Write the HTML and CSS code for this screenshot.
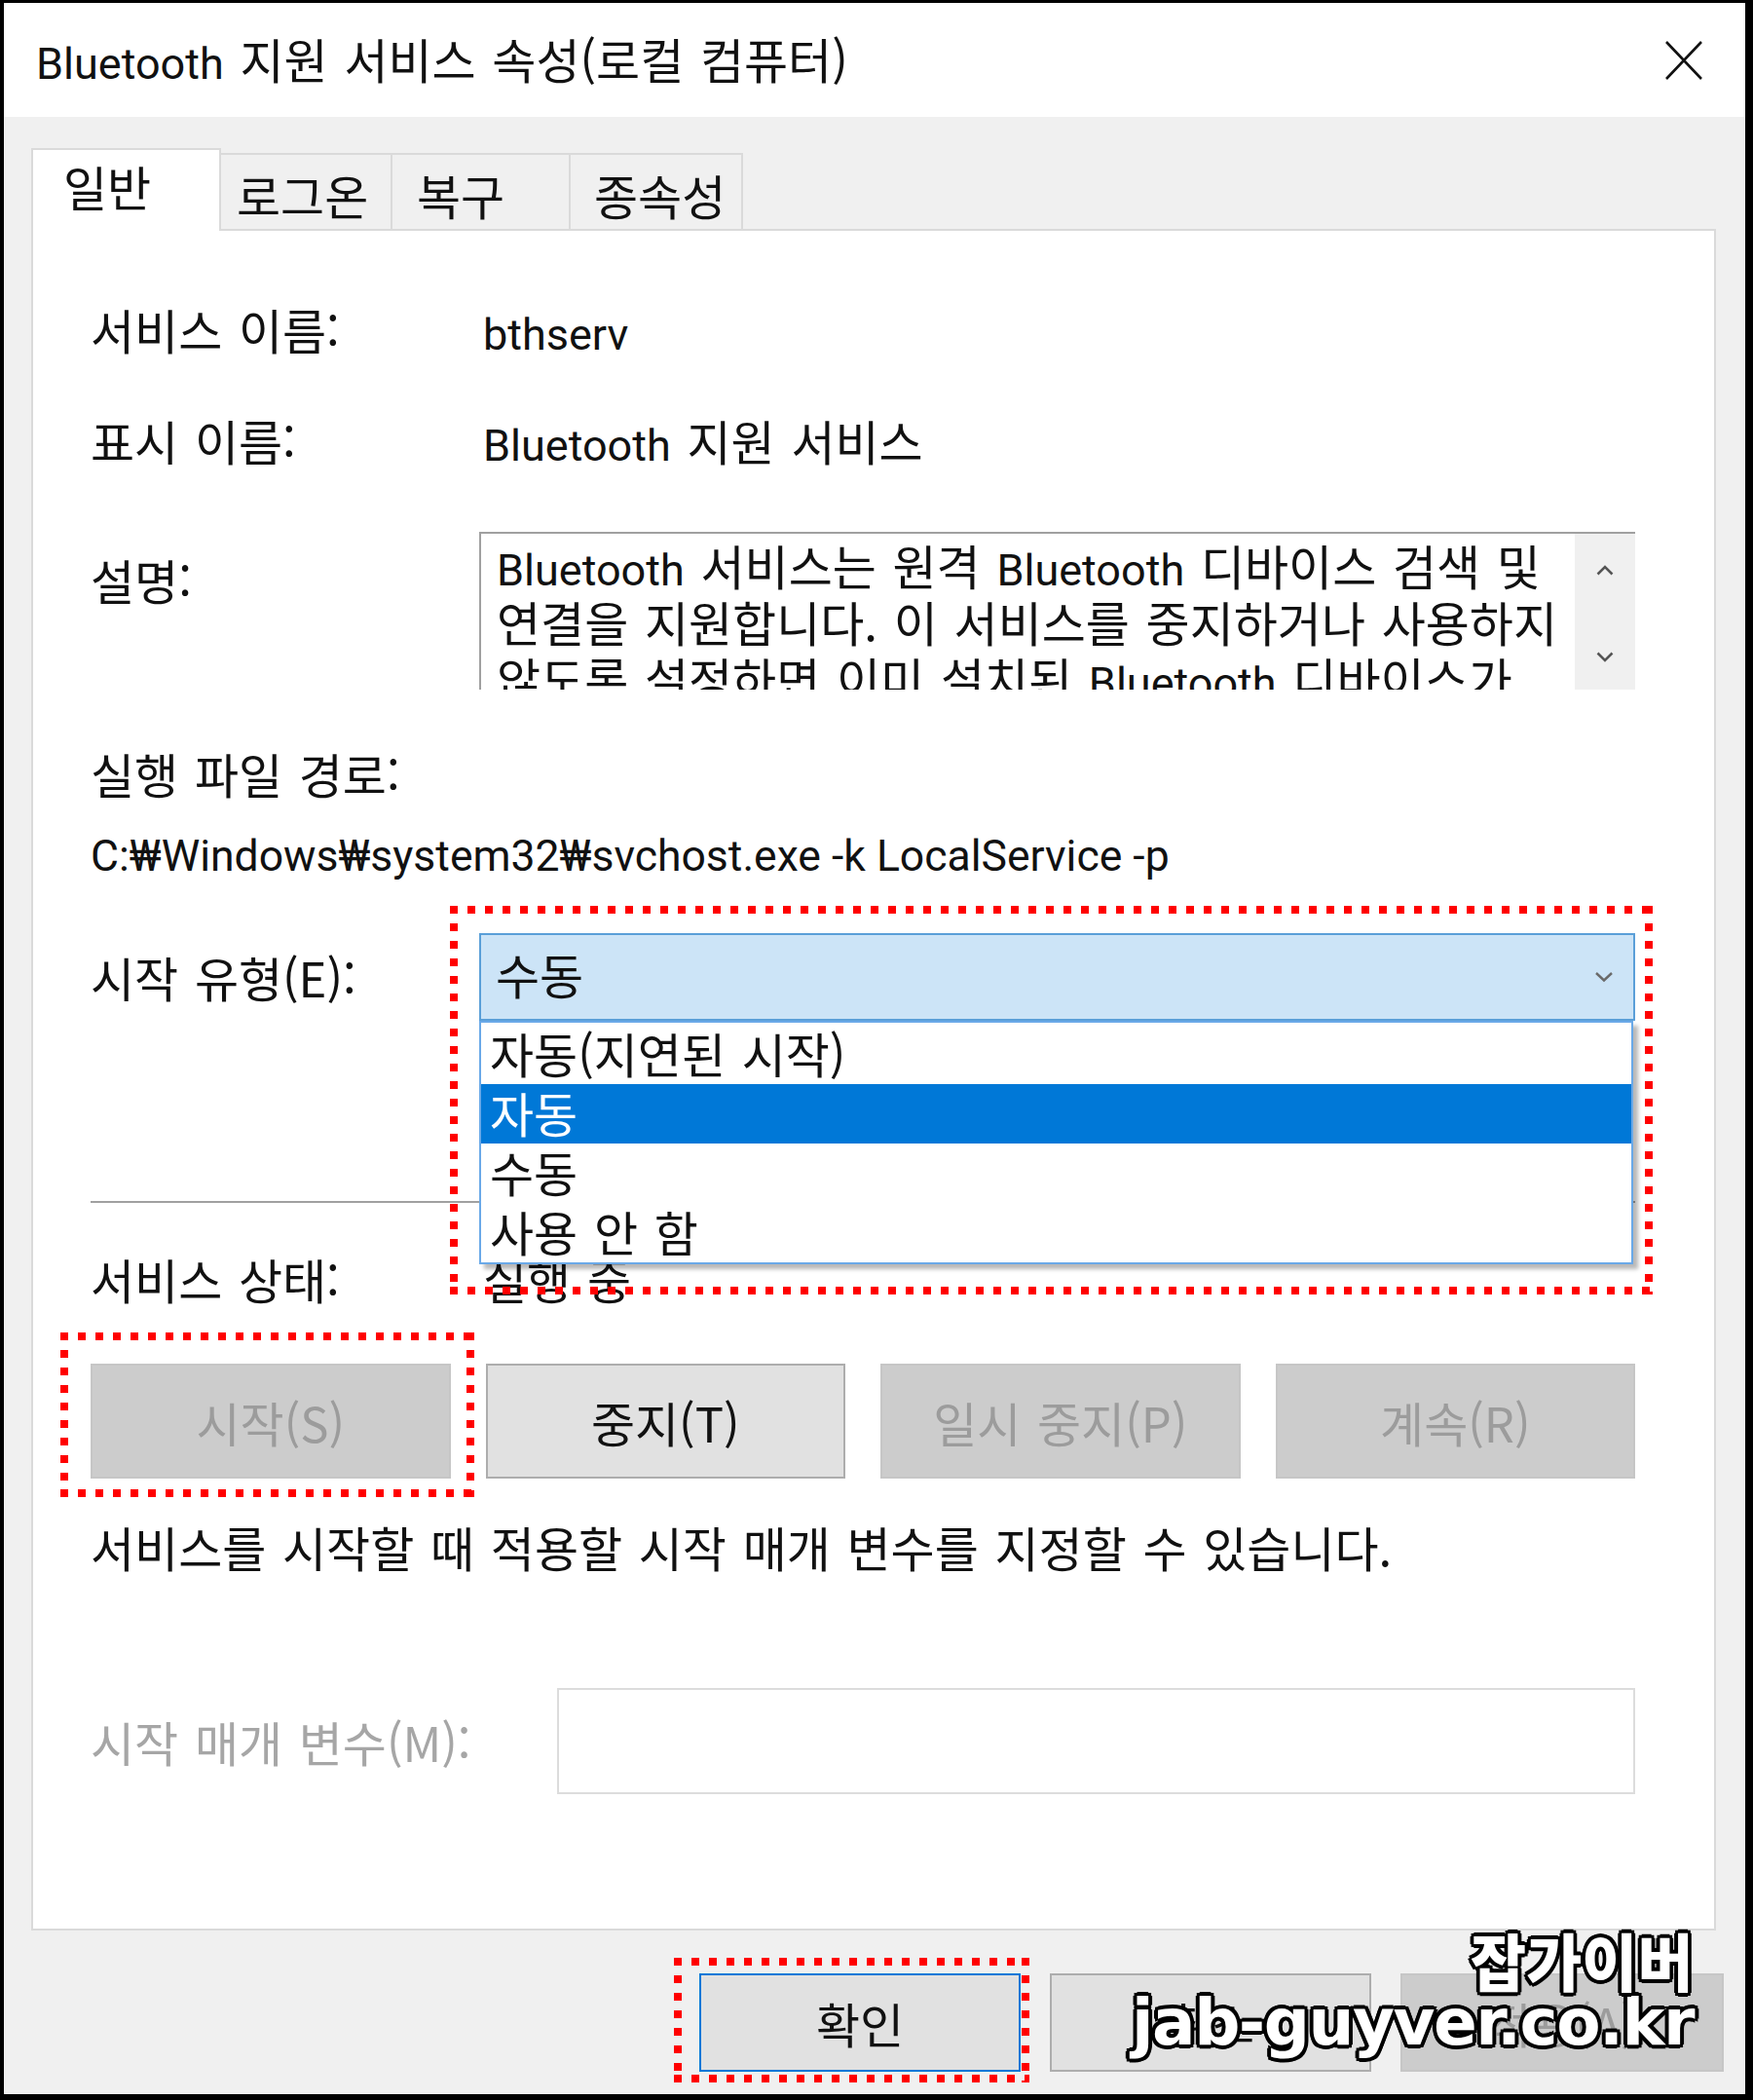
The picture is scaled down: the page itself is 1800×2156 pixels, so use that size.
FILE: index.html
```html
<!DOCTYPE html>
<html lang="ko">
<head>
    <meta charset="utf-8">
    <link rel="stylesheet" href="styles.css">
</head>
<body>
    <div class="window">
        <div class="titlebar">
            <span class="title"><span class="en">Bluetooth</span> 지원 서비스 속성(로컬 컴퓨터)</span>
            <svg class="close" viewBox="0 0 40 42"><path d="M2 2 L38 40 M38 2 L2 40" stroke="#111" stroke-width="2.6" fill="none"/></svg>
        </div>

        <div class="tabs">
            <div class="tab tab-general active">일반</div>
            <div class="tab tab-logon">로그온</div>
            <div class="tab tab-recovery">복구</div>
            <div class="tab tab-deps">종속성</div>
        </div>

        <div class="panel">
            <div class="field">
                <span class="label">서비스 이름:</span>
                <span class="value"><span class="en">bthserv</span></span>
            </div>
            <div class="field field-display">
                <span class="label">표시 이름:</span>
                <span class="value"><span class="en">Bluetooth</span> 지원 서비스</span>
            </div>
            <div class="field field-desc">
                <span class="label">설명:</span>
                <div class="desc">
                    <div class="desc-text">
                        <span class="en">Bluetooth</span> 서비스는 원격 <span class="en">Bluetooth</span> 디바이스 검색 및<br>
                        연결을 지원합니다. 이 서비스를 중지하거나 사용하지<br>
                        않도록 설정하면 이미 설치된 <span class="en">Bluetooth</span> 디바이스가
                    </div>
                    <div class="scroll">
                        <svg class="chev" viewBox="0 0 18 12"><polyline points="1.5,10.5 9,3 16.5,10.5" fill="none" stroke="#555" stroke-width="2.5"/></svg>
                        <svg class="chev" viewBox="0 0 18 12"><polyline points="1.5,1.5 9,9 16.5,1.5" fill="none" stroke="#555" stroke-width="2.5"/></svg>
                    </div>
                </div>
            </div>
            <div class="path-title">실행 파일 경로:</div>
            <div class="path"><span class="en">C:₩Windows₩system32₩svchost.exe -k LocalService -p</span></div>

            <div class="field field-startup">
                <span class="label">시작 유형(E):</span>
                <div class="combo">
                    <div class="select">
                        <span>수동</span>
                        <svg class="chev-small" viewBox="0 0 20 12"><polyline points="2,2 10,9.5 18,2" fill="none" stroke="#6a6a6a" stroke-width="2.4"/></svg>
                    </div>
                    <div class="options">
                        <div class="option">자동(지연된 시작)</div>
                        <div class="option selected">자동</div>
                        <div class="option">수동</div>
                        <div class="option">사용 안 함</div>
                    </div>
                    <div class="mark mark-combo"></div>
                </div>
            </div>

            <div class="separator"></div>

            <div class="field field-status">
                <span class="label">서비스 상태:</span>
                <span class="value">실행 중</span>
            </div>

            <div class="controls">
                <div class="start-wrap">
                    <button class="btn" disabled>시작(S)</button>
                    <div class="mark mark-start"></div>
                </div>
                <button class="btn">중지(T)</button>
                <button class="btn" disabled>일시 중지(P)</button>
                <button class="btn" disabled>계속(R)</button>
            </div>

            <div class="hint">서비스를 시작할 때 적용할 시작 매개 변수를 지정할 수 있습니다.</div>

            <div class="field field-params">
                <span class="label">시작 매개 변수(M):</span>
                <div class="params"></div>
            </div>
        </div>

        <div class="footer">
            <div class="ok-wrap">
                <button class="btn btn-ok">확인</button>
                <div class="mark mark-ok"></div>
            </div>
            <button class="btn">취소</button>
            <button class="btn btn-apply" disabled>적용(A)</button>
        </div>

        <div class="watermark">
            <div class="wm-name">잡가이버</div>
            <div class="wm-url">jab-guyver.co.kr</div>
        </div>
    </div>
</body>
</html>
```

FILE: styles.css
```css
* {
    box-sizing: border-box;
}

body {
    margin: 0;
    width: 1800px;
    height: 2156px;
    background: #000;
    font-family: "Noto Sans CJK KR", sans-serif;
    font-size: 49px;
    word-spacing: 3px;
    color: #111;
    overflow: hidden;
}

/* latin runs are narrower in the original font */
.en {
    font-family: Roboto, "Noto Sans CJK KR", sans-serif;
    font-size: 45px;
    line-height: 40px;
    word-spacing: 0;
}

.window {
    position: relative;
    margin: 3px 8px 0 4px;
    height: 2147px;
    background: #f0f0f0;
}

.titlebar {
    height: 117px;
    background: #fff;
    display: flex;
    align-items: center;
    justify-content: space-between;
    padding: 0 43px 3px 33px;
}

.title {
    line-height: 58px;
}

.close {
    width: 40px;
    height: 42px;
    margin-top: 3px;
}

/* tabs */
.tabs {
    display: flex;
    align-items: flex-end;
    height: 115px;
    padding-left: 28px;
}

.tab {
    height: 78px;
    padding-top: 12px;
    line-height: 58px;
    background: #f0f0f0;
    border-top: 2px solid #dadada;
    border-right: 2px solid #dadada;
    white-space: nowrap;
}

.tab.active {
    height: 85px;
    padding-top: 8px;
    background: #fff;
    border-left: 2px solid #dadada;
    margin-bottom: -2px;
    position: relative;
    z-index: 1;
}

.tab-general { width: 195px; padding-left: 31px; }
.tab-logon { width: 176px; padding-left: 16px; }
.tab-recovery { width: 183px; padding-left: 25px; }
.tab-deps { width: 177px; padding-left: 24px; }

/* main panel */
.panel {
    position: relative;
    margin: 0 30px 0 28px;
    height: 1747px;
    background: #fff;
    border: 2px solid #dadada;
    padding: 72px 81px 0 59px;
}

.field {
    display: flex;
    line-height: 58px;
}

.label {
    width: 399px;
    flex-shrink: 0;
    white-space: nowrap;
}

.value {
    padding-left: 4px;
}

.field-display {
    margin-top: 56px;
}

.field-desc {
    margin-top: 65px;
    align-items: flex-start;
}

.field-desc .label {
    margin-top: 20px;
}

.desc {
    flex: 1;
    height: 162px;
    display: flex;
    border-top: 2px solid #a0a0a0;
    border-left: 2px solid #a0a0a0;
    overflow: hidden;
}

.desc-text {
    flex: 1;
    padding: 3px 0 0 16px;
    white-space: nowrap;
    overflow: hidden;
}

.scroll {
    width: 62px;
    background: #f0f0f0;
    display: flex;
    flex-direction: column;
    justify-content: space-between;
    align-items: center;
    padding: 31px 0 27px;
}

.chev {
    width: 18px;
    height: 12px;
}

.path-title {
    margin-top: 57px;
    line-height: 58px;
}

.path {
    margin-top: 21px;
    line-height: 58px;
    white-space: nowrap;
}

.path .en {
    font-size: 44.5px;
}

/* startup type combo */
.field-startup {
    margin-top: 56px;
    align-items: center;
}

.combo {
    position: relative;
    flex: 1;
}

.select {
    height: 90px;
    background: #cce4f7;
    border: 2px solid #5a9fd8;
    display: flex;
    align-items: center;
    justify-content: space-between;
    padding: 0 20px 6px 15px;
}

.chev-small {
    width: 20px;
    height: 12px;
    margin-top: 6px;
}

.options {
    position: absolute;
    top: 90px;
    left: 0;
    width: 1185px;
    background: #fff;
    border: 2px solid #6aa9e8;
    padding-top: 2px;
    box-shadow: 5px 5px 4px rgba(0, 0, 0, 0.28);
    z-index: 2;
}

.option {
    height: 61px;
    line-height: 58px;
    padding-left: 9px;
}

.option.selected {
    background: #0078d7;
    color: #fff;
}

.separator {
    margin-top: 185px;
    height: 2px;
    background: #a0a0a0;
}

.field-status {
    margin-top: 49px;
}

/* service control buttons */
.controls {
    margin-top: 58px;
    display: grid;
    grid-template-columns: repeat(4, 1fr);
    gap: 36px;
}

.btn {
    height: 118px;
    width: 100%;
    margin: 0;
    padding: 0;
    font: inherit;
    word-spacing: 3px;
    color: #111;
    background: #e1e1e1;
    border: 2px solid #adadad;
}

.btn:disabled {
    background: #cccccc;
    border-color: #c6c6c6;
    color: #9c9c9c;
}

.start-wrap,
.ok-wrap {
    position: relative;
}

.hint {
    margin-top: 41px;
    line-height: 58px;
    white-space: nowrap;
}

.field-params {
    margin-top: 116px;
    align-items: center;
}

.field-params .label {
    width: 479px;
    color: #a6a6a6;
}

.params {
    flex: 1;
    height: 109px;
    background: #fff;
    border: 2px solid #dcdcdc;
}

/* dialog buttons */
.footer {
    display: flex;
    justify-content: flex-end;
    gap: 30px;
    margin-top: 44px;
    padding-right: 22px;
}

.footer .btn,
.ok-wrap {
    width: 330px;
    height: 101px;
}

.footer .btn-apply {
    width: 332px;
}

.btn-ok {
    border-color: #0078d7;
}

/* red dotted annotation boxes */
.mark {
    position: absolute;
    pointer-events: none;
    z-index: 3;
    background:
        repeating-linear-gradient(90deg, #f00 0 8px, transparent 8px 18px) top left / 100% 8px no-repeat,
        repeating-linear-gradient(90deg, #f00 0 8px, transparent 8px 18px) bottom left / 100% 8px no-repeat,
        repeating-linear-gradient(180deg, #f00 0 8px, transparent 8px 18px) top left / 8px 100% no-repeat,
        repeating-linear-gradient(180deg, #f00 0 8px, transparent 8px 18px) top right / 8px 100% no-repeat;
}

.mark-combo {
    left: -30px;
    top: -28px;
    width: 1235px;
    height: 399px;
}

.mark-start {
    left: -31px;
    top: -32px;
    width: 425px;
    height: 169px;
}

.mark-ok {
    left: -26px;
    top: -16px;
    width: 365px;
    height: 128px;
}

/* watermark */
.watermark {
    position: absolute;
    right: 53px;
    top: 1972px;
    text-align: right;
    color: #fff;
    z-index: 5;
    word-spacing: 0;
    text-shadow:
        -3px -3px 0 #000, 3px -3px 0 #000, -3px 3px 0 #000, 3px 3px 0 #000,
        0 -4px 0 #000, 0 4px 0 #000, -4px 0 0 #000, 4px 0 0 #000;
}

.wm-name {
    display: inline-block;
    font-size: 64px;
    font-weight: 900;
    line-height: 72px;
    transform: scaleX(0.97);
    transform-origin: right;
}

.wm-url {
    font-family: "DejaVu Sans", sans-serif;
    font-size: 66px;
    font-weight: 700;
    line-height: 48px;
    letter-spacing: -1.5px;
}
```
